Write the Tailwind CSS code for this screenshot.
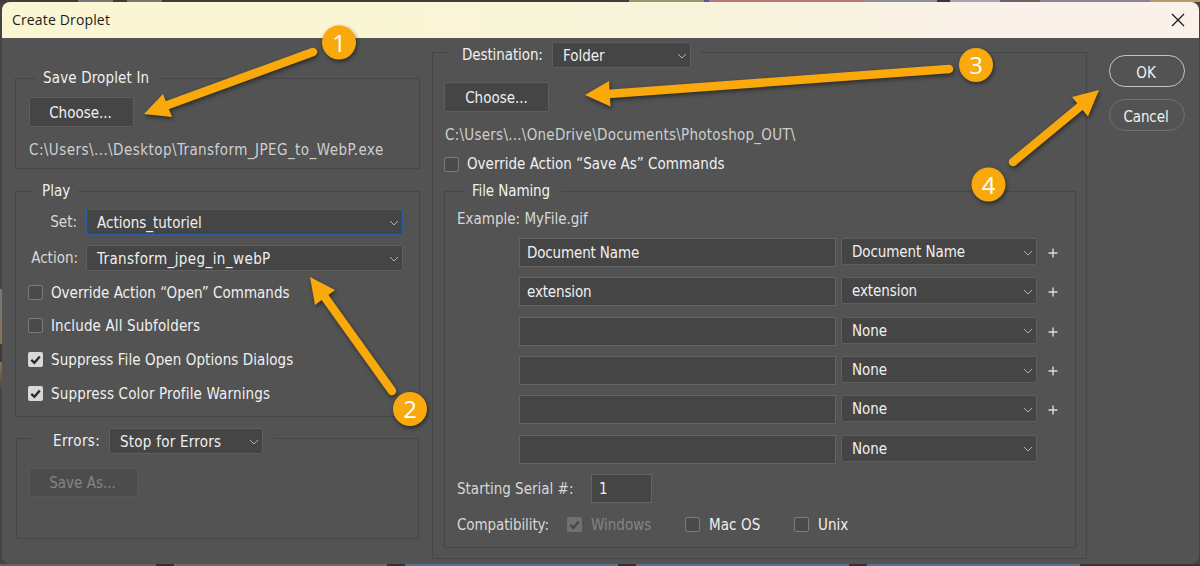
<!DOCTYPE html>
<html lang="en">
<head>
<meta charset="utf-8">
<title>Create Droplet</title>
<script src="https://cdn.jsdelivr.net/npm/@tailwindcss/browser@4"></script>
</head>
<body class="h-[566px] w-[1200px] overflow-hidden bg-[#454042] text-[15px] leading-none text-[#f0f0f0]" style="font-family:'DejaVu Sans Condensed','DejaVu Sans',sans-serif;font-stretch:condensed">
<svg width="0" height="0" class="absolute">
  <defs>
    <symbol id="chev" viewBox="0 0 10 6"><path d="M1 1 L5 5 L9 1" fill="none" stroke="#b0b0b0" stroke-width="1"/></symbol>
    <symbol id="check" viewBox="0 0 15 15"><path d="M3.3 7.8 L6.4 10.8 L11.8 4.4" fill="none" stroke="currentColor" stroke-width="2.3"/></symbol>
    <symbol id="plus" viewBox="0 0 10 10"><path d="M5 .5V9.5M.5 5H9.5" fill="none" stroke="#dcdcdc" stroke-width="1.4"/></symbol>
  </defs>
</svg>
<div class="flex h-[566px] flex-col">
  <div class="flex h-[2px] shrink-0">
    <i class="w-[78px] bg-[#423c3e]"></i><i class="w-[35px] bg-[#7a7476]"></i><i class="w-[14px] bg-[#423c3e]"></i><i class="w-[35px] bg-[#7a7476]"></i><i class="w-[467px] bg-[#423c3e]"></i><i class="w-[75px] bg-[#9b966e]"></i><i class="w-[5px] bg-[#4a5f99]"></i><i class="w-[156px] bg-[#b8777a]"></i><i class="w-[72px] bg-[#8c9098]"></i><i class="w-[13px] bg-[#3a3438]"></i><i class="w-[50px] bg-[#a9a1ae]"></i><i class="w-[40px] bg-[#6d6368]"></i><i class="w-[110px] bg-[#8d8198]"></i><i class="w-[50px] bg-[#b39a6b]"></i>
  </div>
  <div class="flex h-[562px] shrink-0">
  <div class="flex w-[2px] flex-col">
    <i class="h-[287px] bg-[#474345]"></i><i class="h-[55px] bg-linear-to-b from-[#77777a] to-[#8b7355]"></i><i class="h-[18px] bg-[#3f3a3b]"></i><i class="h-[30px] bg-linear-to-b from-[#8b7355] to-[#474345]"></i><i class="flex-1 bg-[#474345]"></i>
  </div>
  <main class="mr-[1px] flex h-[562px] w-[1197px] flex-col overflow-hidden rounded-lg bg-[#535353]">
    <header class="flex h-9 items-center justify-between bg-linear-to-r from-[#faf6d4] from-30% via-[#f8f4dc] via-60% to-[#faf1ea] to-85% pr-[14px] pl-[10px] text-[14px] text-[#1c1c1c]">
      <h1 class="pb-px tracking-[0.15px]" style="font-family:'Open Sans','Noto Sans',sans-serif;font-stretch:normal">Create Droplet</h1>
      <svg class="mb-px size-[14px]" viewBox="0 0 14 14"><path d="M1 1L13 13M13 1L1 13" stroke="#1c1c1c" stroke-width="1.3"/></svg>
    </header>
    <div class="flex flex-1">
      <section class="ml-[13px] w-[405px] pt-[28px]">
        <fieldset class="h-[103px] border border-[#464646]">
          <legend class="ml-[19px] flex h-[25px] w-[124px] items-center pl-2 tracking-[0.15px]">Save Droplet In</legend>
          <div class="ml-[13px]">
            <button class="mt-[6px] block h-[30px] w-[105px] rounded-xs border border-[#5e5e5e] bg-[#454545] pt-[2px] pr-[2px]">Choose...</button>
            <p class="mt-[13px] flex h-[20px] items-center tracking-[0.45px] whitespace-nowrap text-[#cfcfcf]">C:\Users\...\Desktop\Transform_JPEG_to_WebP.exe</p>
          </div>
        </fieldset>
        <fieldset class="mt-[10px] h-[238px] border border-[#464646]">
          <legend class="ml-[16px] flex h-[25px] w-[46px] items-center pl-[10px]">Play</legend>
          <div class="mt-[5px] flex h-[26px] items-center justify-end pr-[16px]">
            <span class="mr-[9px] pt-px text-[#d8d8d8]">Set:</span>
            <div class="flex h-[26px] w-[317px] items-center justify-between rounded-xs bg-[#454545] pt-[2px] pr-[4px] pl-[11px] outline-[1.5px] -outline-offset-1 outline-[#2b5fa8]"><span>Actions_tutoriel</span><svg class="h-[6px] w-[10px]"><use href="#chev"/></svg></div>
          </div>
          <div class="mt-[10px] flex h-[26px] items-center justify-end pr-[16px]">
            <span class="mr-[8px] text-[#d8d8d8]">Action:</span>
            <div class="flex h-[26px] w-[317px] items-center justify-between rounded-xs border border-[#5e5e5e] bg-[#454545] pt-[2px] pr-[3px] pl-[10px]"><span class="tracking-[0.41px]">Transform_jpeg_in_webP</span><svg class="h-[6px] w-[10px]"><use href="#chev"/></svg></div>
          </div>
          <div class="mt-[5px] ml-[12px]">
            <label class="flex h-[34px] items-center gap-2"><i class="mb-[2px] size-[15px] rounded-xs border border-[#7c7c7c] bg-[#4a4a4a]"></i>Override Action “Open” Commands</label>
            <label class="flex h-[33px] items-center gap-2 tracking-[0.13px]"><i class="mb-[2px] size-[15px] rounded-xs border border-[#7c7c7c] bg-[#4a4a4a]"></i>Include All Subfolders</label>
            <label class="flex h-[34px] items-center gap-2 tracking-[0.08px]"><svg class="mb-[2px] size-[15px] rounded-xs bg-[#d8d8d8] text-[#2a2a2a]"><use href="#check"/></svg>Suppress File Open Options Dialogs</label>
            <label class="flex h-[34px] items-center gap-2 tracking-[0.16px]"><svg class="mb-[2px] size-[15px] rounded-xs bg-[#d8d8d8] text-[#2a2a2a]"><use href="#check"/></svg>Suppress Color Profile Warnings</label>
          </div>
        </fieldset>
        <fieldset class="mt-[11px] mr-px ml-px h-[111px] border border-[#464646]">
          <legend class="ml-[15px] flex h-[21px] w-[242px] items-start pl-[21px]">
            <span class="flex h-[26px] w-[56px] items-center tracking-[0.4px]">Errors:</span>
            <div class="flex h-[26px] w-[154px] items-center justify-between rounded-xs border border-[#5e5e5e] bg-[#454545] pt-[2px] pr-[3px] pl-[10px]"><span class="tracking-[0.25px]">Stop for Errors</span><svg class="h-[6px] w-[10px]"><use href="#chev"/></svg></div>
          </legend>
          <button class="mt-[19px] ml-[12px] block h-[29px] w-[109px] rounded-xs border border-[#575757] bg-[#4c4c4c] pt-[2px] pr-[2px] text-[#848484]">Save As...</button>
        </fieldset>
      </section>
      <section class="ml-[12px] w-[655px] pt-[4px]">
        <fieldset class="h-[517px] border border-[#464646]">
          <legend class="ml-[15px] flex h-[20px] w-[252px] items-start pl-[14px]">
            <span class="flex h-[26px] w-[90px] items-center tracking-[-0.1px]">Destination:</span>
            <div class="flex h-[26px] w-[139px] items-center justify-between rounded-xs border border-[#5e5e5e] bg-[#454545] pt-[2px] pr-[3px] pl-[10px]"><span>Folder</span><svg class="h-[6px] w-[10px]"><use href="#chev"/></svg></div>
          </legend>
          <div class="ml-[11px] w-[632px]">
            <button class="mt-[20px] block h-[30px] w-[105px] rounded-xs border border-[#5e5e5e] bg-[#454545] pt-[2px]">Choose...</button>
            <p class="mt-[13px] ml-[1px] flex h-[20px] items-center tracking-[0.26px] whitespace-nowrap text-[#cfcfcf]">C:\Users\...\OneDrive\Documents\Photoshop_OUT\</p>
            <label class="mt-[9px] flex h-[20px] items-center gap-2"><i class="size-[15px] rounded-xs border border-[#7c7c7c] bg-[#4a4a4a]"></i>Override Action “Save As” Commands</label>
            <fieldset class="mt-[5px] h-[369px] border border-[#464646]">
              <legend class="ml-[19px] flex h-[25px] w-[97px] items-center pl-[8px] tracking-[-0.1px]">File Naming</legend>
              <div class="ml-[12px]">
                <p class="mt-[5px] flex h-[20px] items-center text-[#d8d8d8]">Example: MyFile.gif</p>
                <div id="rows" class="mt-[9px] ml-[62px] h-[236px]"></div>
                <div class="flex h-[29px] items-center text-[#d8d8d8]"><span class="w-[134px] pt-[2px]">Starting Serial #:</span><span class="flex h-[29px] w-[61px] items-center border border-[#646464] bg-[#454545] pt-[2px] pl-[7px] text-[#f0f0f0]">1</span></div>
                <div class="mt-[12px] flex h-[20px] items-center">
                  <span class="w-[110px] tracking-[-0.1px] text-[#d8d8d8]">Compatibility:</span>
                  <label class="flex w-[118px] items-center gap-[9px] text-[#848484]"><svg class="mb-[2px] size-[15px] rounded-xs bg-[#707070] text-[#484848]"><use href="#check"/></svg>Windows</label>
                  <label class="flex w-[109px] items-center gap-[9px] tracking-[0.1px]"><i class="mb-[2px] size-[15px] rounded-xs border border-[#7c7c7c] bg-[#4a4a4a]"></i>Mac OS</label>
                  <label class="flex items-center gap-[9px]"><i class="mb-[2px] size-[15px] rounded-xs border border-[#7c7c7c] bg-[#4a4a4a]"></i>Unix</label>
                </div>
              </div>
            </fieldset>
          </div>
        </fieldset>
      </section>
      <section class="ml-[22px] w-[76px] pt-[17px]">
        <button class="block h-[32px] w-[76px] rounded-full border-[1.5px] border-[#c4c4c4] pt-[4px] pr-[2px]">OK</button>
        <button class="mt-[12px] block h-[32px] w-[76px] rounded-full border border-[#707070] pt-[4px] pr-[2px] tracking-[-0.1px]">Cancel</button>
      </section>
    </div>
  </main>
  </div>
  <div class="flex h-[2px] shrink-0">
    <i class="w-[156px] bg-[#646264]"></i><i class="w-[18px] bg-[#352e32]"></i><i class="w-[213px] bg-[#6c6a6c]"></i><i class="w-[18px] bg-[#352e32]"></i><i class="w-[213px] bg-[#56728c]"></i><i class="w-[18px] bg-[#352e32]"></i><i class="w-[213px] bg-[#56728c]"></i><i class="w-[18px] bg-[#352e32]"></i><i class="w-[213px] bg-[#56728c]"></i><i class="w-[120px] bg-[#3a3537]"></i>
  </div>
</div>
<template id="row">
  <div class="flex items-start" style="height:39.35px">
    <div class="flex h-[29px] w-[317px] items-center border border-[#646464] bg-[#454545] pt-[2px] pl-[7px] tracking-[-0.15px]"></div>
    <div class="ml-[5px] flex h-[27px] w-[196px] items-center justify-between rounded-xs border border-[#5e5e5e] bg-[#454545] pt-[2px] pr-[3px] pl-[10px]"><span class="tracking-[-0.08px]"></span><svg class="h-[6px] w-[10px]"><use href="#chev"/></svg></div>
    <svg class="mt-[10px] ml-[11px] size-[10px]"><use href="#plus"/></svg>
  </div>
</template>
<script>
  const data = [["Document Name","Document Name"],["extension","extension"],["","None"],["","None"],["","None"],["","None"]];
  data.forEach(([a, b], i) => {
    const n = document.getElementById("row").content.firstElementChild.cloneNode(true);
    n.children[0].textContent = a;
    n.querySelector("span").textContent = b;
    if (i === 5) n.children[2].remove();
    document.getElementById("rows").append(n);
  });
</script>
<svg class="absolute top-0 left-0 drop-shadow-[1px_2px_2px_rgba(0,0,0,0.5)]" width="1200" height="566" viewBox="0 0 1200 566">
  <g stroke="#f9a90c" stroke-width="8.500" stroke-linecap="round" fill="none">
    <path d="M313 52L165 106M392 391L324 296M949 69L608 94M1013 162L1082 105"/>
  </g>
  <g fill="#f9a90c">
    <path d="M144 114L163 94L172 117ZM310 277L335 290L315 305ZM585 95L609 81L610.500 106.500ZM1099 90L1072 97L1088 116.500Z"/>
    <circle cx="339" cy="42.500" r="17"/><circle cx="410" cy="409" r="17"/><circle cx="976" cy="65" r="17"/><circle cx="988.500" cy="184.500" r="17"/>
  </g>
</svg>
<svg class="absolute top-0 left-0" width="1200" height="566" viewBox="0 0 1200 566">
  <g fill="#fff" font-family="Open Sans" font-size="24" text-anchor="middle" style="font-stretch:normal">
    <text x="339" y="51.500">1</text><text x="410" y="418">2</text><text x="976" y="74">3</text><text x="988.500" y="193.500">4</text>
  </g>
</svg>
</body>
</html>
